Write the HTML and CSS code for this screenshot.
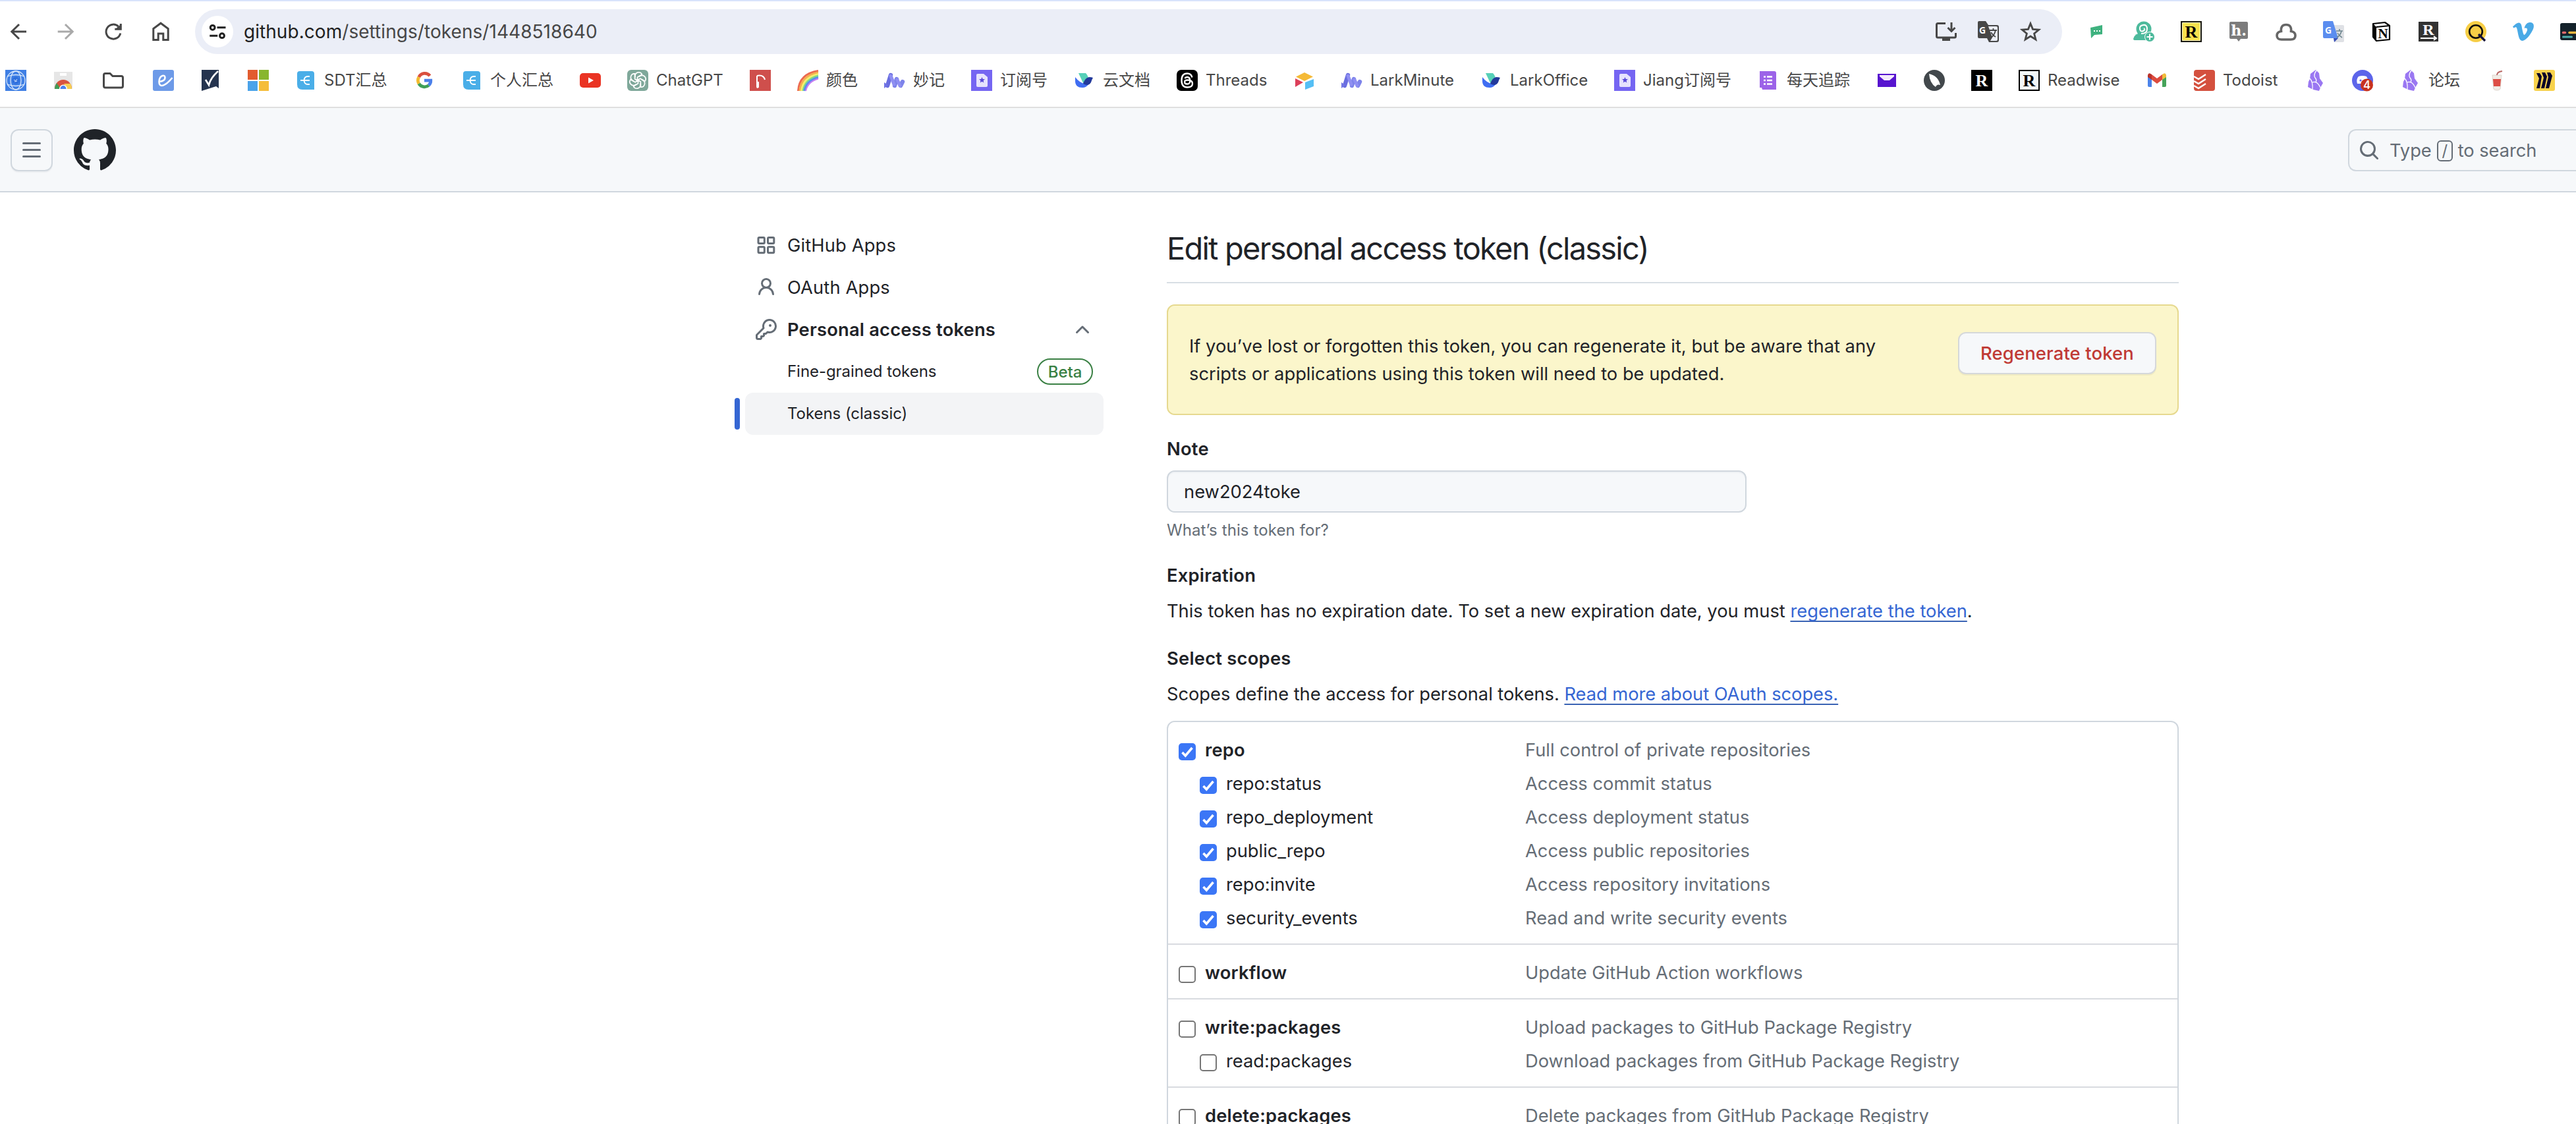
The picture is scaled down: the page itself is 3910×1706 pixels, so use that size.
FILE: index.html
```html
<!DOCTYPE html>
<html lang="en">
<head>
<meta charset="utf-8">
<title>Edit personal access token (classic)</title>
<link rel="stylesheet" href="styles.css">
</head>
<body>
<svg class="sprite" aria-hidden="true">
  <defs>
    <symbol id="i-base" viewBox="0 0 32 32"><path d="M3 6q0-4 4-4h18q4 0 4 4v24H11q-8 0-8-8z" fill="#4aaee8"/><path d="M22 10h-3q-5 0-5.500 6 .5 6 5.500 6h3M8 16h14" fill="none" stroke="#fff" stroke-width="1.800"/></symbol>
    <symbol id="i-minutes" viewBox="0 0 32 32"><g stroke-linecap="round" stroke-width="6.4" fill="none"><path d="M5 24 10 8" stroke="#6a6ee0"/><path d="M16 24l3-10M25 24l3-6" stroke="#7d83ea"/><path d="M10 9l5 13M20 15l4 9" stroke="#8f8ff2" stroke-width="5"/></g><path d="M0 19l6 4-6 5z" fill="#7074e4"/></symbol>
    <symbol id="i-sub" viewBox="0 0 32 32"><path d="M0 0h32v32H0z" fill="#7565f2"/><path d="M8 8q0-2 2-2h9l6 5v13q0 2-2 2H10q-2 0-2-2z" fill="#e6e2fd"/><path d="M16.500 11l1.300 2.900 3.200.3-2.400 2.100.7 3.200-2.800-1.700-2.800 1.700.7-3.200-2.400-2.100 3.200-.3z" fill="#5a49d8"/></symbol>
    <symbol id="i-docs" viewBox="0 0 32 32"><path d="M7 5h11q4 4 4 10l-7 7z" fill="#57d0b8"/><path d="M2 11q6 8 14 10 4-1 6-6v7q-3 5-9 5-11 0-11-10z" fill="#3f6df2"/><path d="M14 21q3-9 9-10 4 0 6 1-2 3-3 7-4 7-12 2z" fill="#22399b"/></symbol>
    <symbol id="i-obsidian" viewBox="0 0 32 32"><path d="M17 0l5 5 1 8 5 7-4 7-2 5-9-2-8-4 1-8 2-4 1-8z" fill="#9a77f2"/><path d="M8 13q5 5 4 17M12 19q7-3 12 8M18 1q-5 7-2 11 3 3 1 7" fill="none" stroke="#fff" stroke-width="1.300"/></symbol>
    <symbol id="i-check" viewBox="0 0 26 26"><path d="M0 0h26v26H0z" fill="none"/><path d="M5.500 14l4.800 5L20.500 7" fill="none" stroke="#fff" stroke-width="3.600"/></symbol>
  </defs>
</svg>

<header class="browser">
  <div class="toolbar">
    <div class="nav-buttons">
      <svg class="icon line" viewBox="0 0 32 32"><path d="M28 16H6M17 5 5.800 16 17 27"/></svg>
      <svg class="icon line dim" viewBox="0 0 32 32"><path d="M3.700 16h22M15 5l11.200 11L15 27"/></svg>
      <svg class="icon line" viewBox="0 0 32 32"><path d="M26.800 18.500A11 11 0 1 1 23.800 8.300M27.300 4v8.300h-9"/><path class="solid" d="M22 9.500l5-4v7h-8z"/></svg>
      <svg class="icon line" viewBox="0 0 32 32"><path d="M4.800 28.500v-17L16 3.200l11.200 8.300v17h-7.400V19h-7.600v9.500z"/></svg>
    </div>
    <div class="omnibox">
      <span class="site-info"><svg viewBox="0 0 48 48"><g fill="none" stroke="#1f1f1f" stroke-width="3"><circle cx="16.700" cy="17.800" r="3.400"/><path d="M23.500 17.800h13M12.300 30.200h12"/><circle cx="31" cy="30.200" r="3.400"/></g></svg></span>
      <span class="url"><b>github.com</b>/settings/tokens/1448518640</span>
      <div class="omni-actions">
        <svg class="icon line" viewBox="0 0 32 32"><path d="M15 3.500H3.500q-2 0-2 2V23q0 2 2 2h25q2 0 2-2v-5M24 2v13M18.500 10l5.500 5.500 5.500-5.500"/><path class="solid" d="M10 25h12v5H10z"/></svg>
        <svg class="icon" viewBox="0 0 32 32"><path d="M2 0h10l4 6h13q3 0 3 3v20q0 3-3 3H17l-3-6H2q-2 0-2-2V2q0-2 2-2z" fill="#474747"/><path d="M16 8h12q2 0 2 2v18q0 2-2 2h-9l3-5z" fill="#ebeef7"/><path d="M18 14h11M23.500 11v3M27 14q-2 8-7 11M20 17q3 5 7 7" fill="none" stroke="#474747" stroke-width="1.800"/><text x="2" y="19" class="g g-white">G</text></svg>
        <svg class="icon line" viewBox="0 0 32 32"><path d="M16 3.800l3.500 8.600 9.200.7-7.100 5.900 2.300 9L16 23l-7.900 5 2.300-9-7.100-5.900 9.200-.7z" stroke-width="2.800"/></svg>
      </div>
    </div>
    <div class="extensions">
      <svg class="icon" viewBox="0 0 32 32"><path d="M7 10l18-4v14l-12 1-5 5z" fill="#3fb27f"/><path d="M12 15h2m2 0h2m2 0h2" stroke="#fff" stroke-width="2"/></svg>
      <svg class="icon" viewBox="0 0 32 32"><circle cx="16" cy="12" r="11.500" fill="#4dba9c"/><path d="M0 27q2-9 14-9l10 11H2q-2 0-2-2z" fill="#4dba9c"/><path d="M12 19q9 0 9-7t-6-6-5 6 5 3 1-4" fill="none" stroke="#fff" stroke-width="2"/><circle cx="25" cy="24" r="7.500" fill="#4dba9c" stroke="#fff"/><path d="M20.500 24h9M25 19.500v9" stroke="#fff" stroke-width="2"/></svg>
      <svg class="icon" viewBox="0 0 32 32"><path d="M0 0h32v32H0z" fill="#1a1a12"/><path d="M2.500 2.500h27v27h-27z" fill="#f7e14e" stroke="#fff7c8"/><text x="16" y="25" class="slab">R</text></svg>
      <svg class="icon" viewBox="0 0 32 32"><path d="M4 1h24q2 0 2 2v22q0 2-2 2h-9l-3 4-3-4H4q-2 0-2-2V3q0-2 2-2z" fill="#7c7c7c"/><text x="16" y="22" class="hyp">h.</text></svg>
      <svg class="icon" viewBox="0 0 32 32"><path d="M8.500 15.500q-1-10 7.500-10t7.500 10q6.500 1 6.500 6.500 0 6-7 6H9q-7 0-7-6 0-5.500 6.500-6.500z" fill="none" stroke="#666" stroke-width="3.600"/></svg>
      <svg class="icon" viewBox="0 0 32 32"><path d="M14 6h16q2 0 2 2v22q0 2-2 2H18z" fill="#dfe1e5"/><path d="M2 0h13l8 26H2q-2 0-2-2V2q0-2 2-2z" fill="#5b8def"/><path d="M16 26h7l-6 6z" fill="#3a50b5"/><path d="M20 15h10M25 12v3M28 15q-1 6-7 10M22 18q2 4 7 7" fill="none" stroke="#6f8790" stroke-width="1.600"/><text x="3" y="19" class="g g-white">G</text></svg>
      <svg class="icon" viewBox="0 0 32 32"><path d="M4 4l18-2 7 5v21l-20 2-5-6z" fill="#fff" stroke="#000" stroke-width="2.200" stroke-linejoin="round"/><path d="M4 4l5 5v21l-5-6z"/><path d="M9 9l20-2" stroke="#000" stroke-width="2"/><text x="19" y="26" class="slab n">N</text></svg>
      <svg class="icon" viewBox="0 0 32 32"><path d="M1 1h30v30H1z" fill="#333"/><text x="16" y="21" class="slab white small">R</text><path d="M4 26h22M24 23l4 3-4 3" stroke="#fff" stroke-width="2" fill="none"/></svg>
      <svg class="icon" viewBox="0 0 32 32"><circle cx="16" cy="16" r="16" fill="#f7ce46"/><circle cx="16" cy="16" r="9.800" fill="none" stroke="#0d0d0d" stroke-width="2.600"/><path d="M20 20l10 10" stroke="#15123a" stroke-width="3.200"/></svg>
      <svg class="icon" viewBox="0 0 32 32"><path d="M0 8.500Q6 2 9.500 2.500c4 .5 4 6 5 10.500 1 5 2 8 3 8s4-4.500 4.500-7.500-2-3.500-4.500-2.500C19 4 23 1.800 27 2c4 .2 5.300 3.500 4.800 7C31 15 21 30 14.500 30 9 30 8.500 20 6.500 12 6 9 5 8.500 1.500 10.500z" fill="#4aaae6"/></svg>
      <svg class="icon" viewBox="0 0 32 32"><rect y="3" width="40" height="26" rx="3" fill="#14222b"/><path d="M4.500 17.500h3" stroke="#e0696d" stroke-width="3.500" stroke-linecap="round"/><path d="M14 17.500h20" stroke="#f0b840" stroke-width="3.500" stroke-linecap="round"/><path d="M4.500 24h13" stroke="#4fb0ae" stroke-width="3" stroke-linecap="round"/></svg>
    </div>
  </div>

  <nav class="bookmarks">
    <a class="bm"><svg class="icon" viewBox="0 0 32 32"><path d="M0 0h32v32H0z" fill="#3f7fe4"/><g fill="none" stroke="#d6e6fb" stroke-width="1.300"><circle cx="16" cy="16" r="14"/><ellipse cx="16" cy="16" rx="8" ry="14"/><path d="M3 10q13-5 26 0M3 22q13 5 26 0"/></g><circle cx="16" cy="16" r="5.500" fill="#2f6fdd"/><path d="M13 15q3 3 5-1M14 18l4-1" stroke="#d6e6fb" fill="none"/></svg></a>
    <a class="bm"><svg class="icon" viewBox="0 0 32 32"><path d="M2 3h28v26H2z" fill="#e6e6e6"/><path d="M11 5h10v4H11z" fill="#fff"/><path d="M3 29a13 14 0 0 1 26 0z" fill="#d9543f"/><path d="M3 29q0-5 3-9l6 9z" fill="#3f9d58"/><path d="M29 29q0-4-2-8H17l5 8z" fill="#f6cf52"/><path d="M10 29a6 6.500 0 0 1 12 0z" fill="#fff"/><path d="M11.500 29a4.500 5 0 0 1 9 0z" fill="#4d83ec"/></svg></a>
    <a class="bm folder"><svg class="icon" viewBox="0 0 32 32"><path d="M1.500 8q0-2.500 2.500-2.500h7l4 4h13q2.500 0 2.500 2.500v12.500q0 2.500-2.500 2.500H4q-2.500 0-2.500-2.500z" fill="none" stroke="#474747" stroke-width="3"/></svg></a>
    <a class="bm"><svg class="icon" viewBox="0 0 32 32"><rect width="32" height="32" rx="3" fill="#6d9ae8"/><path d="M9.500 18q9-1 9-6 0-4-4-3-5 2-5 9 0 6 4 6 7-1 16-12" fill="none" stroke="#fff" stroke-width="2.600"/></svg></a>
    <a class="bm"><svg class="icon" viewBox="0 0 32 32"><path d="M2 0h26v28l-4-3-22 7z" fill="#25344f"/><path d="M8 15l5 8q2-10 14-21" fill="none" stroke="#fff" stroke-width="2.600"/></svg></a>
    <a class="bm"><svg class="icon" viewBox="0 0 32 32"><path d="M0 0h15v15H0z" fill="#e25c2f"/><path d="M17 0h15v15H17z" fill="#88b62f"/><path d="M0 17h15v15H0z" fill="#4aa3ea"/><path d="M17 17h15v15H17z" fill="#f5bd3a"/></svg></a>
    <a class="bm"><svg class="icon"><use href="#i-base"/></svg><span class="w96">SDT汇总</span></a>
    <a class="bm"><svg class="icon" viewBox="0 0 32 32"><g fill="none" stroke-width="4.800"><path d="M24.500 9A10 10 0 0 0 7.800 11" stroke="#d9503f"/><path d="M7.800 11a10 10 0 0 0 0 10" stroke="#f3bb2f"/><path d="M7.800 21a10 10 0 0 0 15 2.500" stroke="#3f9f58"/><path d="M22.800 23.500q3.200-3 3-7.300H16" stroke="#4b80ea"/></g></svg></a>
    <a class="bm"><svg class="icon"><use href="#i-base"/></svg><span class="w96">个人汇总</span></a>
    <a class="bm"><svg class="icon" viewBox="0 0 32 32"><rect y="5" width="32" height="22" rx="5" fill="#ea3323"/><path d="M13 11.500l8 4.500-8 4.500z" fill="#fff"/></svg></a>
    <a class="bm"><svg class="icon" viewBox="0 0 32 32"><rect width="32" height="32" rx="6" fill="#7fa89a"/><g fill="none" stroke="#fff" stroke-width="1.700"><path id="gp" d="M12 11.500V9a5.500 5.500 0 0 1 10.500-2l-7 4.300v7"/><use href="#gp" transform="rotate(60 16 16)"/><use href="#gp" transform="rotate(120 16 16)"/><use href="#gp" transform="rotate(180 16 16)"/><use href="#gp" transform="rotate(240 16 16)"/><use href="#gp" transform="rotate(300 16 16)"/></g></svg><span class="w102">ChatGPT</span></a>
    <a class="bm"><svg class="icon" viewBox="0 0 32 32"><path d="M0 0h32v32H0z" fill="#cf4f4c"/><path d="M11 9v16q0 3 2 1v-8M11 9q10-2 12 6" fill="none" stroke="#fff" stroke-width="2"/></svg></a>
    <a class="bm"><svg class="icon" viewBox="0 0 32 32"><g fill="none" stroke-width="3"><path d="M1.500 32Q3 6 32 1.500" stroke="#ec6a50"/><path d="M4 32Q6 9 32 4" stroke="#f4b04c"/><path d="M6.500 32Q9 12 32 6.500" stroke="#f5ef6a"/><path d="M9 32Q12 14 32 9" stroke="#7fd98a"/><path d="M11 32Q14 16 32 11.500" stroke="#5a8cf0"/><path d="M13 32Q16 18 32 13.500" stroke="#c77cf2" stroke-width="2"/></g></svg><span>颜色</span></a>
    <a class="bm"><svg class="icon"><use href="#i-minutes"/></svg><span>妙记</span></a>
    <a class="bm"><svg class="icon"><use href="#i-sub"/></svg><span>订阅号</span></a>
    <a class="bm"><svg class="icon"><use href="#i-docs"/></svg><span>云文档</span></a>
    <a class="bm"><svg class="icon" viewBox="0 0 32 32"><rect width="32" height="32" rx="7"/><path d="M23.500 11.500Q22 5.500 16 5.500q-8.500 0-8.500 10.500T16 26.500q8 0 8-5.500 0-5.500-7.500-5.500-4.500 0-4.500 3t4 3q4.500 0 4.300-5.500Q20 11 16 11q-2.500 0-3.600 2" fill="none" stroke="#fff" stroke-width="2.400"/></svg><span class="w94">Threads</span></a>
    <a class="bm"><svg class="icon" viewBox="0 0 32 32"><path d="M16 4l13 6.500L16 17 3 10.500z" fill="#f5ba36"/><path d="M30 14v11l-13 5V19z" fill="#55bff5"/><path d="M2 13l12 6L2 26z" fill="#dc3f5a"/></svg></a>
    <a class="bm"><svg class="icon"><use href="#i-minutes"/></svg><span class="w128">LarkMinute</span></a>
    <a class="bm"><svg class="icon"><use href="#i-docs"/></svg><span class="w118">LarkOffice</span></a>
    <a class="bm"><svg class="icon"><use href="#i-sub"/></svg><span class="w134">Jiang订阅号</span></a>
    <a class="bm"><svg class="icon" viewBox="0 0 32 32"><path d="M3 2h22q3 0 3 3v25H7l-1-3H3z" fill="#9c63e8"/><path d="M9 10.500h3m2 0h8M9 16h3m2 0h8M9 21.500h3m2 0h8" stroke="#fff" stroke-width="2.600"/></svg><span class="w96">每天追踪</span></a>
    <a class="bm"><svg class="icon" viewBox="0 0 32 32"><path d="M2 6h28v20H2z" fill="#5714cf"/><path d="M5 8h22v2l-7 6h-8l-7-6z" fill="#f4e9fc"/></svg></a>
    <a class="bm"><svg class="icon" viewBox="0 0 32 32"><circle cx="16" cy="16" r="16" fill="#42484c"/><path d="M8 6q14 3 17 17-5-2-7 3-9-6-10-20z" fill="#fff"/></svg></a>
    <a class="bm"><svg class="icon" viewBox="0 0 32 32"><path d="M0 0h32v32H0z"/><text x="16" y="25" class="slab white">R</text></svg></a>
    <a class="bm"><svg class="icon" viewBox="0 0 32 32"><path d="M1 1h30v30H1z" fill="#f2f6f8" stroke="#000" stroke-width="2"/><text x="16" y="25" class="slab">R</text></svg><span class="w110">Readwise</span></a>
    <a class="bm"><svg class="icon" viewBox="0 0 32 32"><path d="M2 8v16q0 2 2 2h4V12z" fill="#4b83ea"/><path d="M24 12v14h4q2 0 2-2V8z" fill="#46a35a"/><path d="M8 7l8 6 8-6v8l-8 6-8-6z" fill="#dc4b3e"/><path d="M2 8q1-5 6-1v8l-6-4z" fill="#b9322a"/><path d="M30 8q-1-5-6-1v8l6-4z" fill="#f0bb3a"/></svg></a>
    <a class="bm"><svg class="icon" viewBox="0 0 32 32"><rect width="32" height="32" rx="4" fill="#d4503e"/><path d="M0 10l7 4 11-7M0 17l7 4 11-7M0 24l7 4 11-7" fill="none" stroke="#fff" stroke-width="2.400"/></svg><span class="w84">Todoist</span></a>
    <a class="bm"><svg class="icon"><use href="#i-obsidian"/></svg></a>
    <a class="bm"><svg class="icon" viewBox="0 0 32 32"><circle cx="16" cy="16" r="16" fill="#5d65ea"/><path d="M10 10q6-2 12 0 3 5 2 11H8Q6 14 10 10z" fill="#fff"/><circle cx="13" cy="16" r="1.600" fill="#5d65ea"/><circle cx="22.500" cy="23" r="9.500" fill="#c8321f"/><text x="22.500" y="29" class="badge">4</text></svg></a>
    <a class="bm"><svg class="icon"><use href="#i-obsidian"/></svg><span>论坛</span></a>
    <a class="bm"><svg class="icon" viewBox="0 0 32 32"><path d="M9 8h14l-2 21q-1 2-5 2t-5-2z" fill="#f1ece6" stroke="#ddd5cc"/><path d="M10 14h12l-1 11H11z" fill="#dd4e46"/><path d="M16 8q0-5 8-6" fill="none" stroke="#b96a66" stroke-width="2"/></svg></a>
    <a class="bm"><svg class="icon" viewBox="0 0 32 32"><rect width="32" height="32" rx="3" fill="#f8d24c"/><path d="M4 5h5l3 5-3 18H4l4-15zM12 4h5l3 6-4 18h-5l4-16zM20 4h5l3 5-5 19h-5l4-17z" fill="#0a0328"/></svg></a>
  </nav>
</header>

<div class="app-header">
  <button class="menu-btn"><svg class="icon" viewBox="0 0 32 32"><path d="M3.500 5.500h25M3.500 15.500h25M3.500 25.500h25" stroke="#656d76" stroke-width="3" stroke-linecap="round"/></svg></button>
  <svg class="mark" viewBox="0 0 16 16"><path d="M8 0c4.420 0 8 3.580 8 8a8.013 8.013 0 0 1-5.450 7.590c-.4.080-.55-.17-.55-.38 0-.27.010-1.130.010-2.200 0-.75-.25-1.230-.54-1.480 1.780-.2 3.650-.88 3.650-3.950 0-.88-.31-1.590-.82-2.150.080-.2.360-1.020-.080-2.120 0 0-.67-.22-2.200.820-.64-.18-1.320-.27-2-.27-.68 0-1.360.090-2 .27-1.530-1.030-2.200-.82-2.200-.82-.44 1.100-.16 1.920-.080 2.120-.51.560-.82 1.280-.82 2.150 0 3.060 1.860 3.750 3.640 3.950-.23.2-.44.550-.51 1.070-.46.210-1.610.550-2.330-.66-.15-.24-.6-.83-1.230-.82-.67.010-.27.380.010.530.34.190.730.9.820 1.130.16.450.680 1.310 2.690.940 0 .670.010 1.300.010 1.490 0 .21-.15.450-.55.380A7.995 7.995 0 0 1 0 8c0-4.420 3.580-8 8-8Z"/></svg>
  <div class="search">
    <svg class="icon" viewBox="0 0 16 16" fill="#656d76"><path d="M10.680 11.740a6 6 0 0 1-7.922-8.982 6 6 0 0 1 8.982 7.922l3.040 3.040a.749.749 0 0 1-.326 1.275.749.749 0 0 1-.734-.215ZM11.500 7a4.499 4.499 0 1 0-8.997 0A4.499 4.499 0 0 0 11.500 7Z"/></svg>
    <span class="search-text">Type <kbd>/</kbd> to search</span>
  </div>
</div>

<div class="layout">
  <nav class="sidebar">
    <a class="side-row"><svg class="icon" viewBox="0 0 32 32"><g fill="none" stroke="#656d76" stroke-width="3"><rect x="4" y="4.500" width="9.300" height="9" rx="1.500"/><rect x="18.500" y="4.500" width="9.300" height="9" rx="1.500"/><rect x="4" y="18.700" width="9.300" height="9" rx="1.500"/><rect x="18.500" y="18.700" width="9.300" height="9" rx="1.500"/></g></svg><span>GitHub Apps</span></a>
    <a class="side-row"><svg class="icon" viewBox="0 0 16 16" fill="#656d76"><path d="M10.561 8.073a6.005 6.005 0 0 1 3.432 5.142.75.75 0 1 1-1.498.070 4.500 4.500 0 0 0-8.990 0 .75.75 0 0 1-1.498-.070 6.004 6.004 0 0 1 3.431-5.142 3.999 3.999 0 1 1 5.123 0ZM10.500 5a2.500 2.500 0 1 0-5 0 2.500 2.500 0 0 0 5 0Z"/></svg><span>OAuth Apps</span></a>
    <a class="side-row strong"><svg class="icon" viewBox="0 0 16 16" fill="#656d76"><path d="M10.500 0a5.499 5.499 0 1 1-1.288 10.848l-.932.932a.749.749 0 0 1-.53.22H7v.75a.749.749 0 0 1-.22.530l-.5.5a.749.749 0 0 1-.53.22H5v.75a.749.749 0 0 1-.22.530l-.5.5a.749.749 0 0 1-.53.220h-2A1.750 1.750 0 0 1 0 14.250v-2c0-.199.079-.389.220-.53l4.932-4.932A5.500 5.500 0 0 1 10.500 0Zm-4 5.500c-.001.431.069.860.205 1.269a.75.75 0 0 1-.181.768L1.500 12.560v1.690c0 .138.112.25.25.25h1.690l.06-.06v-1.190a.75.75 0 0 1 .75-.75h1.190l.06-.06v-1.190a.75.75 0 0 1 .75-.75h1.190l1.023-1.025a.75.75 0 0 1 .768-.18A4 4 0 1 0 6.500 5.500ZM11 6a1 1 0 1 1 0-2 1 1 0 0 1 0 2Z"/></svg><span>Personal access tokens</span><svg class="icon push" viewBox="0 0 32 32"><path d="M7.500 20.500l8.500-8.500 8.500 8.500" fill="none" stroke="#656d76" stroke-width="3" stroke-linecap="round" stroke-linejoin="round"/></svg></a>
    <a class="side-row sub"><span>Fine-grained tokens</span><span class="beta push">Beta</span></a>
    <a class="side-row sub current"><span>Tokens (classic)</span></a>
  </nav>

  <main class="content">
    <h1>Edit personal access token (classic)</h1>
    <div class="flash">
      <p>If you’ve lost or forgotten this token, you can regenerate it, but be aware that any<br>scripts or applications using this token will need to be updated.</p>
      <button class="danger">Regenerate token</button>
    </div>
    <label class="label first" for="note">Note</label>
    <input id="note" class="field" type="text" value="new2024toke">
    <p class="hint">What’s this token for?</p>
    <h2 class="label">Expiration</h2>
    <p class="para">This token has no expiration date. To set a new expiration date, you must <a>regenerate the token</a>.</p>
    <h2 class="label">Select scopes</h2>
    <p class="para scopes-text">Scopes define the access for personal tokens. <a>Read more about OAuth scopes.</a></p>
    <div class="scopes">
      <section class="group">
        <div class="scope top"><i class="box on"><svg><use href="#i-check"/></svg></i><span class="name">repo</span><span class="desc">Full control of private repositories</span></div>
        <div class="scope"><i class="box on"><svg><use href="#i-check"/></svg></i><span class="name">repo:status</span><span class="desc">Access commit status</span></div>
        <div class="scope"><i class="box on"><svg><use href="#i-check"/></svg></i><span class="name">repo_deployment</span><span class="desc">Access deployment status</span></div>
        <div class="scope"><i class="box on"><svg><use href="#i-check"/></svg></i><span class="name">public_repo</span><span class="desc">Access public repositories</span></div>
        <div class="scope"><i class="box on"><svg><use href="#i-check"/></svg></i><span class="name">repo:invite</span><span class="desc">Access repository invitations</span></div>
        <div class="scope"><i class="box on"><svg><use href="#i-check"/></svg></i><span class="name">security_events</span><span class="desc">Read and write security events</span></div>
      </section>
      <section class="group">
        <div class="scope top"><i class="box"></i><span class="name">workflow</span><span class="desc">Update GitHub Action workflows</span></div>
      </section>
      <section class="group">
        <div class="scope top"><i class="box"></i><span class="name">write:packages</span><span class="desc">Upload packages to GitHub Package Registry</span></div>
        <div class="scope"><i class="box"></i><span class="name">read:packages</span><span class="desc">Download packages from GitHub Package Registry</span></div>
      </section>
      <section class="group">
        <div class="scope top"><i class="box"></i><span class="name">delete:packages</span><span class="desc">Delete packages from GitHub Package Registry</span></div>
      </section>
    </div>
  </main>
</div>
</body>
</html>
```
FILE: styles.css
```css
* { box-sizing: border-box; margin: 0; padding: 0; }
body {
  width: 3910px;
  height: 1706px;
  overflow: hidden;
  background: #fff;
  color: #1f2328;
  font: 27.3px/42px Inter, "Noto Sans CJK SC", sans-serif;
}
.sprite { display: none; }
.icon { width: 32px; height: 32px; flex: none; display: block; overflow: visible; }
.icon.line { fill: none; stroke: #474747; stroke-width: 3; }
.icon.dim { stroke: #a9a9a9; }
.icon .solid { fill: #474747; stroke: none; }
.push { margin-left: auto; }

/* Lettering inside toolbar icons */
.g { font: 700 14px "Open Sans", sans-serif; }
.g-white { fill: #fff; }
.slab { font: 700 26px "Liberation Serif", serif; text-anchor: middle; fill: #000; }
.slab.white { fill: #fff; }
.slab.small { font-size: 24px; }
.slab.n { font-size: 21px; }
.hyp { font: 700 22px "DejaVu Serif", serif; text-anchor: middle; fill: #fff; }
.badge { font: 500 17px Inter, sans-serif; text-anchor: middle; fill: #fff; }

/* Browser chrome */
.browser { border-top: 2px solid #d8e3fb; border-bottom: 2px solid #dfdfdf; height: 164px; }
.toolbar { display: flex; align-items: center; height: 92px; padding-left: 12px; }
.nav-buttons { display: flex; gap: 40px; }
.omnibox {
  display: flex;
  align-items: center;
  flex: none;
  width: 2834px;
  height: 68px;
  margin: 0 36px;
  padding: 0 32px 0 10px;
  border-radius: 34px;
  background: #ebeef7;
}
.site-info { width: 48px; height: 48px; border-radius: 50%; background: #fff; flex: none; }
.site-info svg { display: block; width: 48px; height: 48px; }
.url { margin-left: 16px; font-size: 28px; color: #474747; letter-spacing: .05px; }
.url b { font-weight: 400; color: #1f1f1f; }
.omni-actions { display: flex; gap: 32px; margin-left: auto; padding-left: 32px; }
.extensions { display: flex; gap: 40px; flex: none; width: 744px; overflow: hidden; }
.bookmarks { display: flex; align-items: center; gap: 40px; height: 56px; padding-left: 8px; }
.bm { display: flex; align-items: center; gap: 12px; flex: none; font-size: 24px; line-height: 32px; color: #474747; white-space: nowrap; }
.folder { margin: 0 4px; }
.w84 { width: 84px; }
.w94 { width: 94px; }
.w96 { width: 96px; }
.w102 { width: 102px; }
.w110 { width: 110px; }
.w118 { width: 118px; }
.w128 { width: 128px; }
.w134 { width: 134px; }

/* Application header */
.app-header {
  display: flex;
  align-items: center;
  height: 128px;
  padding: 2px 0 0 16px;
  background: #f6f8fa;
  border-bottom: 2px solid #d0d7de;
}
.menu-btn {
  display: flex;
  align-items: center;
  justify-content: center;
  width: 64px;
  height: 64px;
  margin-right: 32px;
  border: 2px solid #d0d7de;
  border-radius: 12px;
  background: #f6f8fa;
  box-shadow: 0 2px 0 rgba(31, 35, 40, .04);
}
.mark { width: 64px; height: 64px; fill: #1f2328; }
.search {
  display: flex;
  align-items: center;
  gap: 15px;
  width: 346px;
  height: 64px;
  margin-left: auto;
  padding-left: 14px;
  border: 2px solid #d0d7de;
  border-right: 0;
  border-radius: 12px 0 0 12px;
  color: #656d76;
}
.search-text { display: flex; align-items: center; gap: 8px; padding-top: 1px; white-space: nowrap; letter-spacing: -.05px; }
kbd {
  width: 24px;
  height: 32px;
  border: 2px solid #656d76;
  border-radius: 6px;
  font: 24px/28px Inter, sans-serif;
  text-align: center;
}

/* Page columns */
.layout { display: flex; gap: 96px; padding: 48px 0 0 1131px; }
.sidebar { width: 544px; flex: none; }
.side-row {
  display: flex;
  align-items: center;
  gap: 16px;
  height: 64px;
  padding: 0 16px;
  border-radius: 12px;
  letter-spacing: .15px;
  position: relative;
}
.side-row > .icon + span { padding-top: 2px; }
.side-row.strong { font-weight: 600; letter-spacing: .2px; }
.side-row.sub { padding-left: 64px; font-size: 24px; letter-spacing: -.05px; }
.side-row.current { background: #f3f4f6; }
.side-row.current::before {
  content: "";
  position: absolute;
  left: -16px;
  top: 8px;
  width: 8px;
  height: 48px;
  border-radius: 4px;
  background: #3566d3;
}
.beta {
  width: 85px;
  height: 40px;
  border: 2px solid #3a8044;
  border-radius: 20px;
  color: #3a8044;
  font-weight: 500;
  line-height: 37px;
  text-align: center;
}

.content { width: 1536px; flex: none; }
h1 {
  padding: 1px 0 15px;
  border-bottom: 2px solid #d8dee4;
  font-size: 47px;
  font-weight: 400;
  line-height: 72px;
  letter-spacing: -1.78px;
}
.flash {
  display: flex;
  justify-content: space-between;
  align-items: flex-start;
  height: 168px;
  margin-top: 32px;
  padding: 40px 32px;
  border: 2px solid #e6d98f;
  border-radius: 12px;
  background: #fbf6cb;
}
.flash p { padding-top: 1px; }
.danger {
  width: 301px;
  height: 64px;
  border: 2px solid #d5d8da;
  border-radius: 12px;
  background: #f6f8fa;
  box-shadow: 0 2px 0 rgba(31, 35, 40, .05);
  color: #c03a35;
  font: 500 27.5px/58px Inter, sans-serif;
  letter-spacing: .1px;
}
.label { display: block; margin-top: 30px; font-size: 27.3px; font-weight: 600; line-height: 42px; letter-spacing: .25px; }
.label.first { margin-top: 31px; }
.field {
  display: block;
  width: 880px;
  height: 64px;
  margin-top: 11px;
  padding: 0 24px;
  border: 2px solid #d0d7de;
  border-radius: 12px;
  background: #f6f8fa;
  box-shadow: inset 0 2px 0 rgba(208, 215, 222, .2);
  color: #1f2328;
  font: 27.3px Inter, sans-serif;
}
.hint { margin-top: 9px; font-size: 24px; line-height: 36px; color: #656d76; letter-spacing: .1px; }
.para { margin-top: 12px; white-space: nowrap; }
.para a {
  color: #3566d3;
  text-decoration: underline 2px #3a63b4;
  text-decoration-skip-ink: none;
  text-underline-offset: 5px;
}
.scopes-text { letter-spacing: -.04px; }
.scopes { margin-top: 19px; border: 2px solid #d0d7de; border-radius: 12px; }
.group { padding: 15px 16px; }
.group + .group { border-top: 2px solid #d8dbe0; }
.scope { display: flex; height: 51px; padding: 7px 0 0 32px; }
.scope.top { padding-left: 0; }
.box { width: 26px; height: 26px; flex: none; margin: 10px 14px 0 0; border: 2px solid #767676; border-radius: 5px; }
.box.on { border: 0; background: #3b76f6; }
.box svg { display: block; width: 26px; height: 26px; }
.name { width: 454px; }
.top .name { width: 486px; font-weight: 600; letter-spacing: .2px; }
.desc { color: #656d76; white-space: nowrap; }
```
